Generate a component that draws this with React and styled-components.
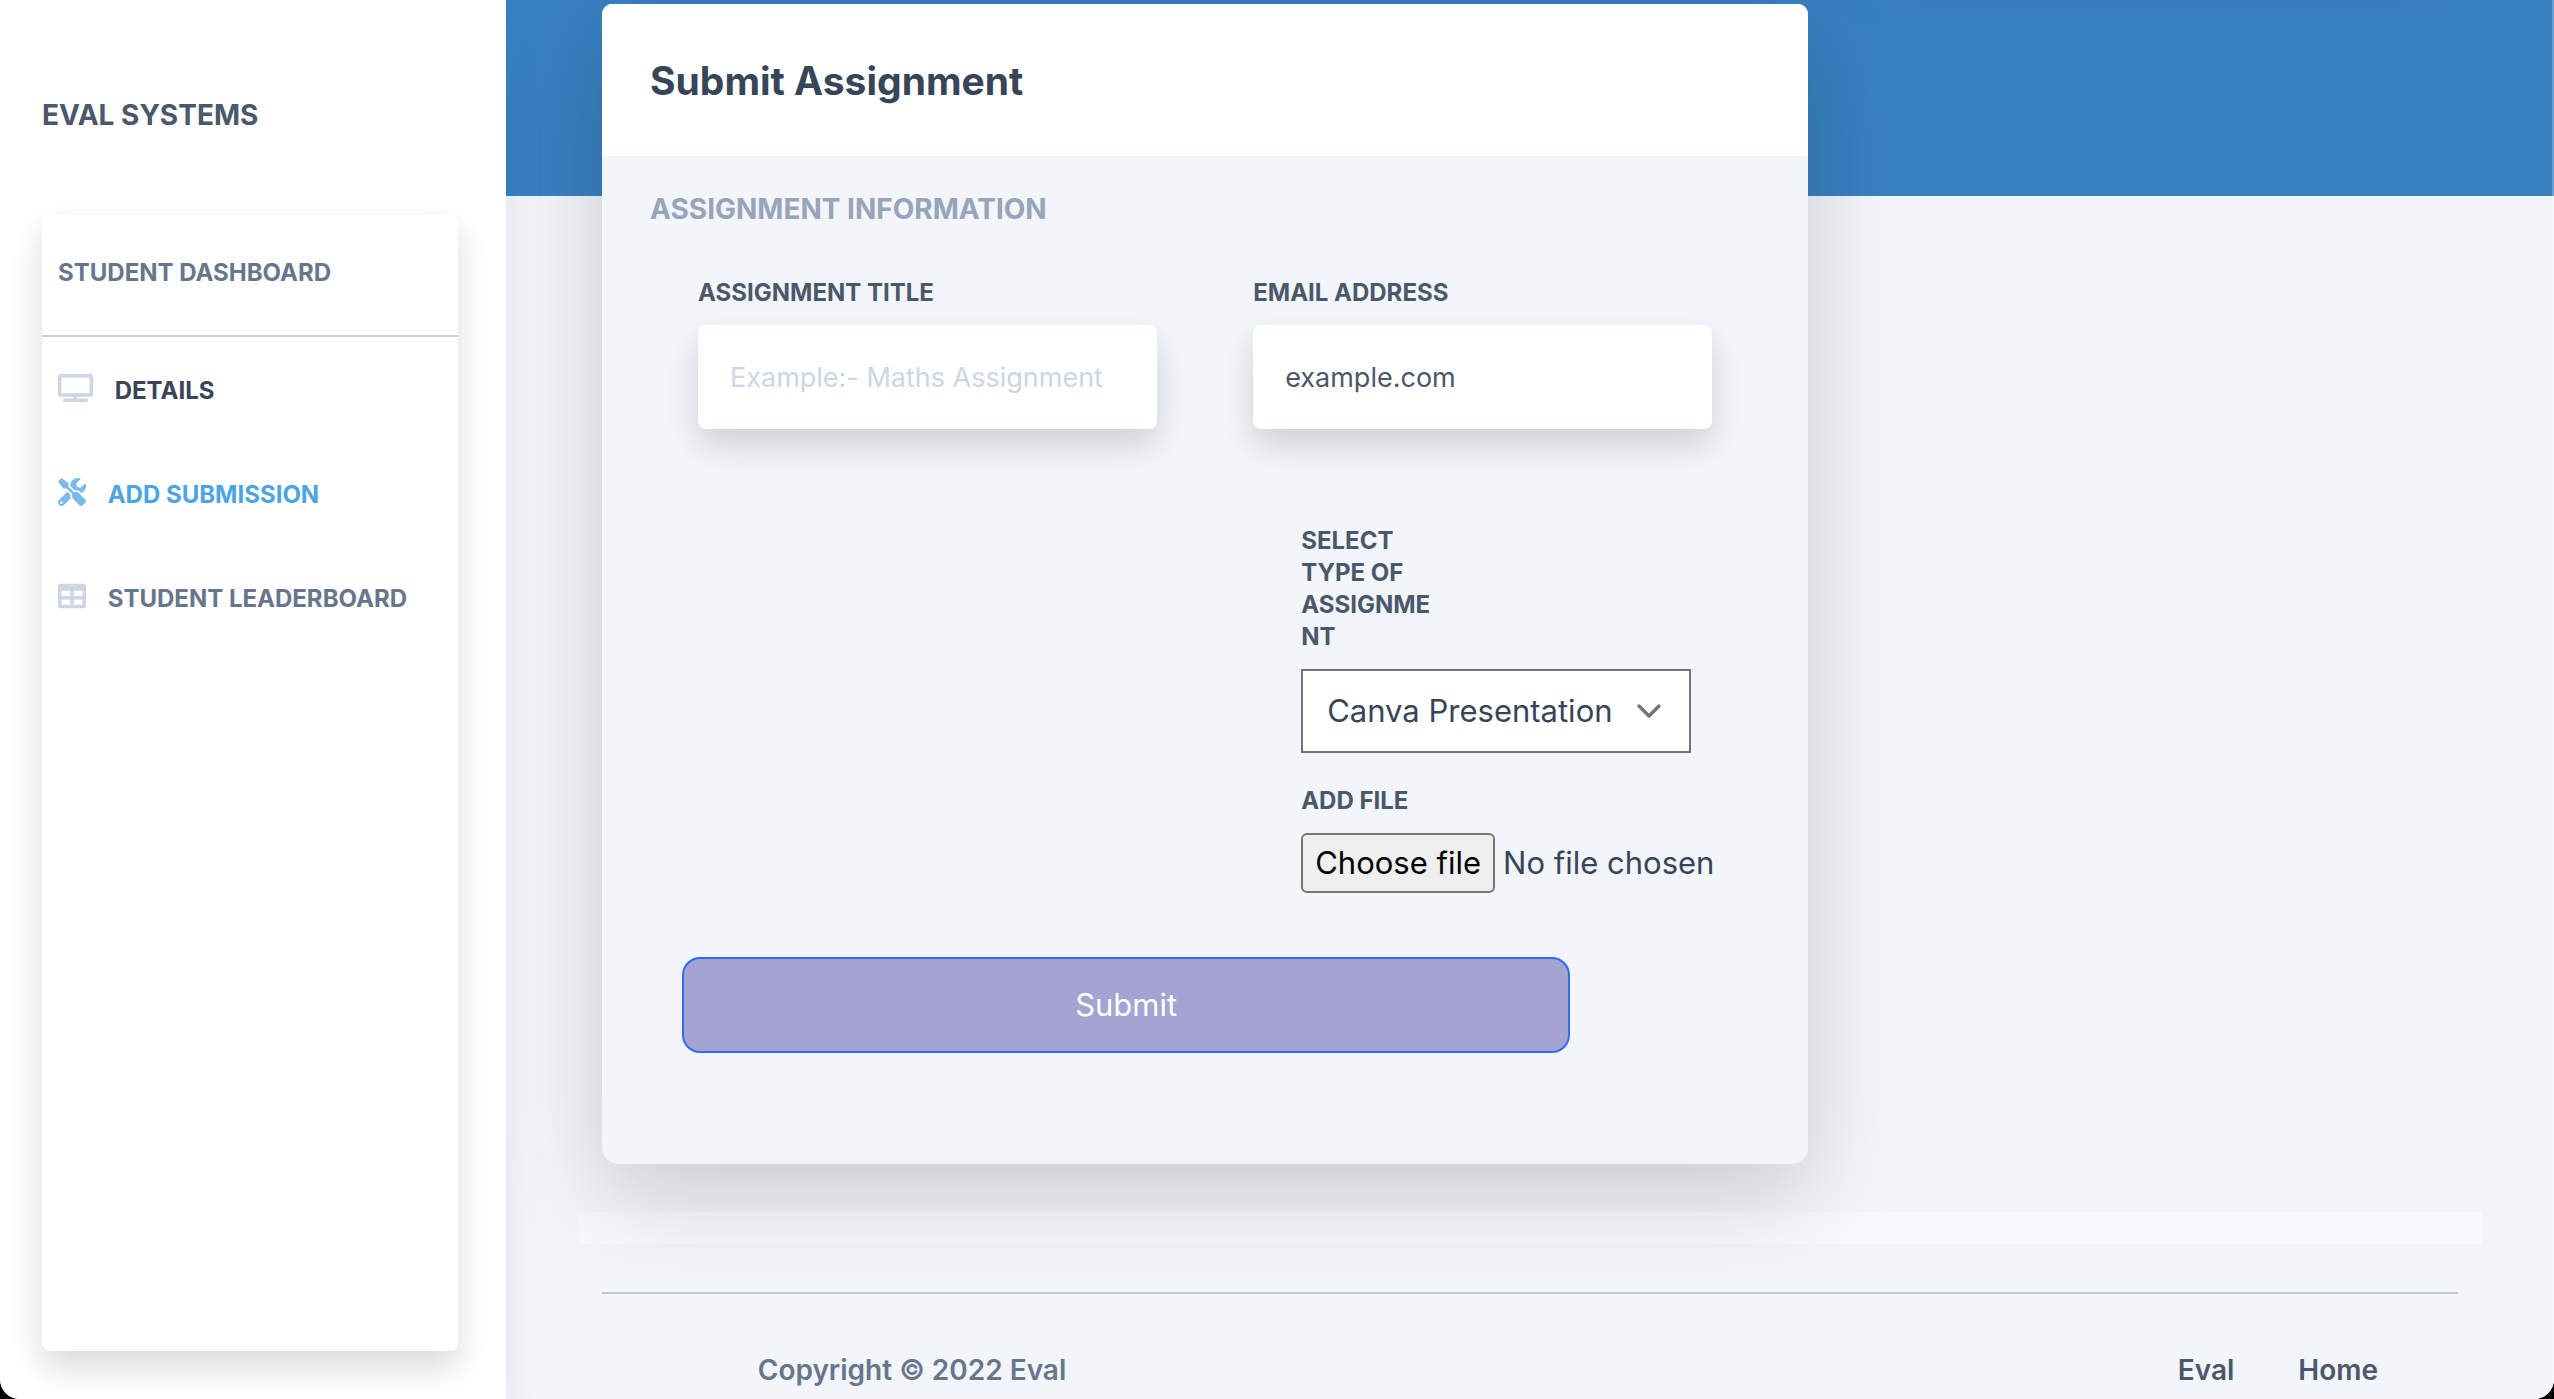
import { useRef, useState } from "react";
import { ChevronDown } from "lucide-react";
import { FaTable, FaTools, FaTv } from "react-icons/fa";
import styled, { createGlobalStyle } from "styled-components";

const GlobalStyle = createGlobalStyle`
  :root {
    --color-banner: #3881c1;
    --color-page: #f2f5fa;
    --color-title: #384458;
    --color-text: #4b576b;
    --color-muted: #67758d;
    --color-faint: #98a4b9;
    --color-placeholder: #cdd6e2;
    --color-active: #4ba4e3;
    --shadow: 0 16px 32px rgba(0, 0, 0, 0.15);
    --shadow-lg: 0 32px 96px rgba(0, 0, 0, 0.175);
  }

  *, *::before, *::after {
    box-sizing: border-box;
  }

  body {
    margin: 0;
    background: #000;
    font-family: Inter, "Liberation Sans", sans-serif;
    font-size: 31px;
    line-height: 48px;
    color: var(--color-title);
  }

  h1, h2, h3, ul, p {
    margin: 0;
    padding: 0;
    font-size: inherit;
    font-weight: inherit;
  }

  a {
    color: inherit;
    text-decoration: none;
  }

  button, input, select {
    font: inherit;
    color: inherit;
    margin: 0;
  }
`;

const Layout = styled.div`
  display: flex;
  min-height: 100vh;
  overflow: hidden;
  border-radius: 0 0 20px 20px;
  background: var(--color-page);
`;

const Sidebar = styled.nav`
  position: relative;
  z-index: 1;
  flex: 0 0 506px;
  display: flex;
  flex-direction: column;
  gap: 80px;
  padding: 95px 48px 48px 42px;
  background: #fff;
  box-shadow: 0 40px 50px -10px rgba(0, 0, 0, 0.1),
    0 20px 20px -10px rgba(0, 0, 0, 0.04);
`;

const Brand = styled.a`
  font-size: 28px;
  line-height: 40px;
  font-weight: 700;
  text-transform: uppercase;
  color: var(--color-text);
`;

const SidebarCard = styled.div`
  flex: 1;
  border-radius: 8px;
  background: #fff;
  box-shadow: var(--shadow);
`;

const SidebarHeading = styled.h2`
  padding: 38px 16px 42px;
  border-bottom: 2px solid #cbd0d6;
  font-size: 24px;
  line-height: 40px;
  font-weight: 700;
  text-transform: uppercase;
  color: var(--color-muted);
`;

const Menu = styled.ul`
  list-style: none;
`;

const MenuLink = styled.a`
  display: block;
  padding: 34px 16px 30px;
  font-size: 24px;
  line-height: 40px;
  font-weight: 700;
  text-transform: uppercase;
  white-space: nowrap;
  color: ${(props) => props.$color};

  & svg {
    width: ${(props) => (props.$wideIcon ? "35px" : "28px")};
    height: 28px;
    margin-right: 16px;
    vertical-align: -3px;
    color: ${(props) => (props.$active ? "#78bbea" : "var(--color-placeholder)")};
  }
`;

const Main = styled.div`
  flex: 1;
  min-width: 0;
  padding: 4px 70px 0 72px;
  border-right: 2px solid rgba(255, 255, 255, 0.25);
  background: linear-gradient(
    var(--color-banner) 196px,
    var(--color-page) 196px
  );
`;

const Columns = styled.div`
  display: flex;
  justify-content: space-between;
  align-items: flex-start;
  padding: 0 24px;
`;

const Card = styled.section`
  width: 65%;
  border-radius: 10px 10px 16px 16px;
  background: var(--color-page);
  box-shadow: var(--shadow-lg);
`;

/* Profile card, scrolled out above the window */
const ProfileCard = styled.aside`
  width: 32%;
  height: 300px;
  margin-top: -390px;
  border-radius: 12px;
  background: #fff;
  box-shadow: var(--shadow-lg);
`;

const CardHeader = styled.header`
  padding: 49px 48px 47px;
  border-radius: 10px 10px 0 0;
  background: #fff;
`;

const CardTitle = styled.h1`
  font-size: 39px;
  line-height: 56px;
  font-weight: 700;
`;

const Form = styled.form`
  padding: 33px 48px 111px;
`;

const SectionTitle = styled.h3`
  margin-bottom: 48px;
  font-size: 28px;
  line-height: 40px;
  font-weight: 700;
  text-transform: uppercase;
  color: var(--color-faint);
`;

const Fields = styled.div`
  display: grid;
  grid-template-columns: repeat(2, minmax(0, 1fr));
  gap: 96px;
  padding: 0 48px;
`;

const Field = styled.div`
  display: flex;
  flex-direction: column;
  gap: 16px;
`;

const UploadFields = styled.div`
  grid-column: 2;
  display: flex;
  flex-direction: column;
  gap: 32px;
  padding-left: 48px;
`;

const Label = styled.label`
  width: ${(props) => (props.$narrow ? "34%" : "auto")};
  font-size: 24px;
  line-height: 32px;
  font-weight: 700;
  text-transform: uppercase;
  overflow-wrap: break-word;
  color: var(--color-text);
`;

const TextInput = styled.input`
  width: 100%;
  height: 104px;
  padding: 0 32px;
  border: 0;
  border-radius: 8px;
  background: #fff;
  font-size: 27px;
  line-height: 40px;
  color: var(--color-text);
  box-shadow: var(--shadow);

  &::placeholder {
    color: var(--color-placeholder);
    opacity: 1;
  }
`;

const SelectBox = styled.div`
  display: grid;
  align-items: center;
  align-self: flex-start;

  & > * {
    grid-area: 1 / 1;
  }

  & svg {
    justify-self: end;
    margin-right: 22px;
    color: #71747c;
    pointer-events: none;
  }
`;

const Select = styled.select`
  height: 84px;
  padding: 0 76px 0 24px;
  border: 2px solid #71747c;
  border-radius: 0;
  background: #fff;
  appearance: none;
`;

const FilePicker = styled.div`
  display: flex;
  align-items: center;
  gap: 8px;
  white-space: nowrap;
`;

const FileButton = styled.button`
  height: 60px;
  padding: 0 12px;
  border: 2px solid #767676;
  border-radius: 6px;
  background: #efefef;
  color: #000;
`;

const SubmitButton = styled.button`
  display: block;
  width: 80%;
  height: 96px;
  margin: 64px 0 0 32px;
  border: 2px solid #2f6cf5;
  border-radius: 18px;
  background: #a4a3d1;
  color: #fff;
`;

const Strip = styled.div`
  height: 32px;
  margin-top: 48px;
  background: #f8f9fb;
`;

const Footer = styled.footer`
  display: flex;
  justify-content: space-between;
  margin: 48px 24px 0;
  padding: 56px 48px 8px 0;
  border-top: 2px solid #c1c8d0;
  font-size: 28px;
  line-height: 40px;
  font-weight: 600;
  color: var(--color-text);
`;

const Copyright = styled.p`
  width: 620px;
  text-align: center;
  color: var(--color-muted);
`;

const FooterLink = styled.a`
  padding: 0 32px;
`;

const menu = [
  {
    icon: FaTv,
    label: "Details",
    color: "var(--color-title)",
    wideIcon: true,
  },
  {
    icon: FaTools,
    label: "Add Submission",
    color: "var(--color-active)",
    active: true,
  },
  { icon: FaTable, label: "Student Leaderboard", color: "var(--color-muted)" },
];

function AppSidebar() {
  return (
    <Sidebar>
      <Brand href="#">Eval Systems</Brand>
      <SidebarCard>
        <SidebarHeading>Student Dashboard</SidebarHeading>
        <Menu>
          {menu.map(({ icon: Icon, label, color, active, wideIcon }) => (
            <li key={label}>
              <MenuLink
                href="#"
                $color={color}
                $active={active}
                $wideIcon={wideIcon}
              >
                <Icon /> {label}
              </MenuLink>
            </li>
          ))}
        </Menu>
      </SidebarCard>
    </Sidebar>
  );
}

function FileInput({ id }) {
  const inputRef = useRef(null);
  const [fileName, setFileName] = useState("");

  return (
    <FilePicker>
      <input
        ref={inputRef}
        id={id}
        type="file"
        hidden
        onChange={(e) => setFileName(e.target.files[0]?.name || "")}
      />
      <FileButton type="button" onClick={() => inputRef.current.click()}>
        Choose file
      </FileButton>
      <span>{fileName || "No file chosen"}</span>
    </FilePicker>
  );
}

function SubmitAssignment() {
  return (
    <Card>
      <CardHeader>
        <CardTitle>Submit Assignment</CardTitle>
      </CardHeader>
      <Form onSubmit={(e) => e.preventDefault()}>
        <SectionTitle>Assignment Information</SectionTitle>
        <Fields>
          <Field>
            <Label htmlFor="title">Assignment Title</Label>
            <TextInput id="title" placeholder="Example:- Maths Assignment" />
          </Field>
          <Field>
            <Label htmlFor="email">Email Address</Label>
            <TextInput id="email" type="email" defaultValue="example.com" />
          </Field>
          <UploadFields>
            <Field>
              <Label htmlFor="type" $narrow>
                Select type of assignment
              </Label>
              <SelectBox>
                <Select id="type">
                  <option>Canva Presentation</option>
                </Select>
                <ChevronDown size={40} />
              </SelectBox>
            </Field>
            <Field>
              <Label htmlFor="file">Add file</Label>
              <FileInput id="file" />
            </Field>
          </UploadFields>
        </Fields>
        <SubmitButton type="submit">Submit</SubmitButton>
      </Form>
    </Card>
  );
}

function App() {
  return (
    <>
      <GlobalStyle />
      <Layout>
        <AppSidebar />
        <Main>
          <Columns>
            <SubmitAssignment />
            <ProfileCard />
          </Columns>
          <Strip />
          <Footer>
            <Copyright>Copyright © 2022 Eval</Copyright>
            <div>
              <FooterLink href="#">Eval</FooterLink>
              <FooterLink href="#">Home</FooterLink>
            </div>
          </Footer>
        </Main>
      </Layout>
    </>
  );
}

export default App;
